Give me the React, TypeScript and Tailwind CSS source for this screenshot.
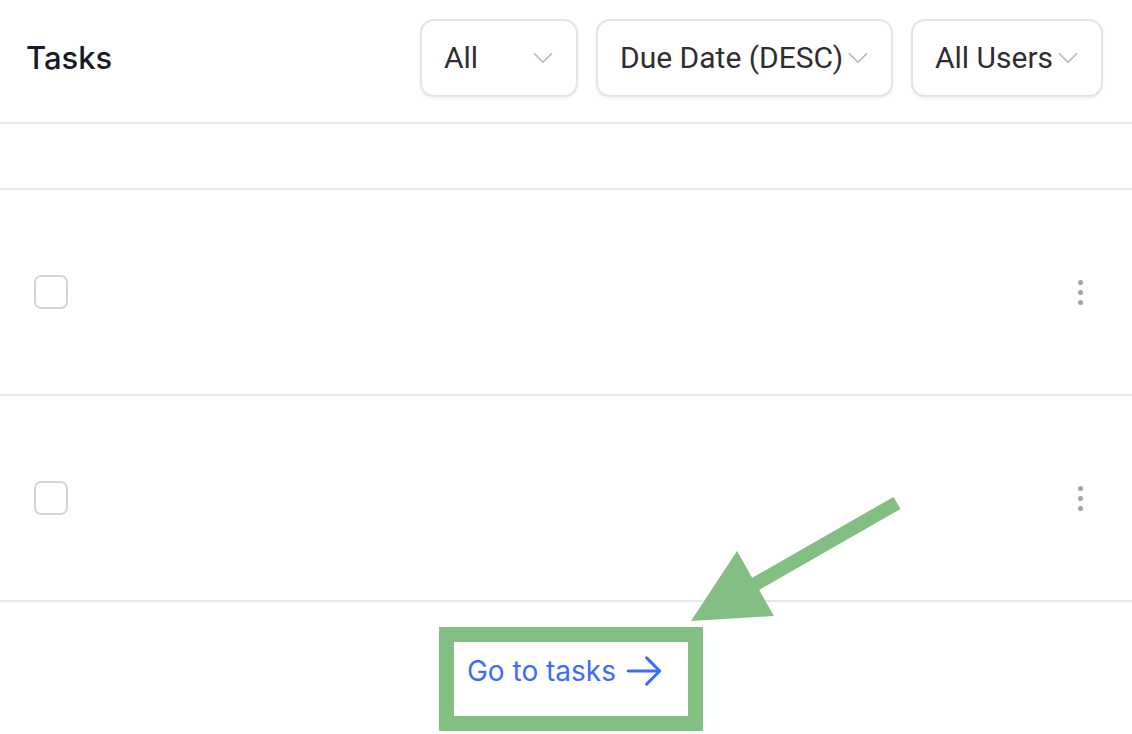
import { ChevronDown } from 'lucide-react'

const filters = [
  { label: 'All', width: 'w-[158px]' },
  { label: 'Due Date (DESC)', width: 'w-[297px]' },
  { label: 'All Users', width: 'w-[192px]' },
]

function FilterSelect({ label, width }: { label: string; width: string }) {
  return (
    <button
      type="button"
      className={`flex h-[78px] ${width} items-center justify-between rounded-[14px] border-2 border-[#e4e4e7] bg-white pl-[22px] pr-[16px] text-left shadow-[0_2px_3px_rgba(0,0,0,0.06)]`}
    >
      <span className="whitespace-nowrap text-[30px] leading-none text-[#2e2e33] font-['Roboto',sans-serif]">
        {label}
      </span>
      <ChevronDown className="-ml-[4px] h-[34px] w-[34px] shrink-0 text-[#b4b4b8]" strokeWidth={1.1} />
    </button>
  )
}

function TaskRow() {
  return (
    <div className="flex h-[206px] items-center justify-between border-b-2 border-[#e8e8ec] pl-[34px] pr-[49px]">
      <div className="h-[34px] w-[34px] rounded-[7px] border-2 border-[#d4d6dc] bg-white" />
      <div className="flex flex-col gap-[5px]">
        <span className="h-[5px] w-[5px] rounded-full bg-[#9ca3af]" />
        <span className="h-[5px] w-[5px] rounded-full bg-[#9ca3af]" />
        <span className="h-[5px] w-[5px] rounded-full bg-[#9ca3af]" />
      </div>
    </div>
  )
}

export default function App() {
  return (
    <div className="relative h-[734px] w-full overflow-hidden bg-white font-['Inter',sans-serif]">
      <div className="flex h-[124px] items-center justify-between border-b-2 border-[#e8e8ec] pb-[6px] pl-[26px] pr-[29px]">
        <h1 className="text-[31px] font-medium text-[#161b26]">Tasks</h1>
        <div className="flex gap-[18px]">
          {filters.map((f) => (
            <FilterSelect key={f.label} label={f.label} width={f.width} />
          ))}
        </div>
      </div>

      <div className="h-[66px] border-b-2 border-[#e8e8ec]" />

      <TaskRow />
      <TaskRow />

      <div className="flex justify-center pt-[48px]">
        <a href="#" className="flex items-center text-[28px] text-[#3b6df6]">
          Go to tasks
          <svg
            width="42"
            height="42"
            viewBox="0 0 24 24"
            fill="none"
            stroke="currentColor"
            strokeWidth={1.7}
            strokeLinecap="round"
            strokeLinejoin="round"
            className="ml-[7px]"
          >
            <path d="M13.5 4.5 21 12m0 0-7.5 7.5M21 12H3" />
          </svg>
        </a>
      </div>

      {/* annotation overlay */}
      <div className="pointer-events-none absolute left-[439px] top-[627px] h-[104px] w-[264px] border-[15px] border-[#83bf83]" />
      <svg className="pointer-events-none absolute left-0 top-0" width="1132" height="734">
        <line x1="897" y1="503" x2="752" y2="586" stroke="#83bf83" strokeWidth="14" />
        <polygon points="737,551 774,616 691,621" fill="#83bf83" />
      </svg>
    </div>
  )
}
